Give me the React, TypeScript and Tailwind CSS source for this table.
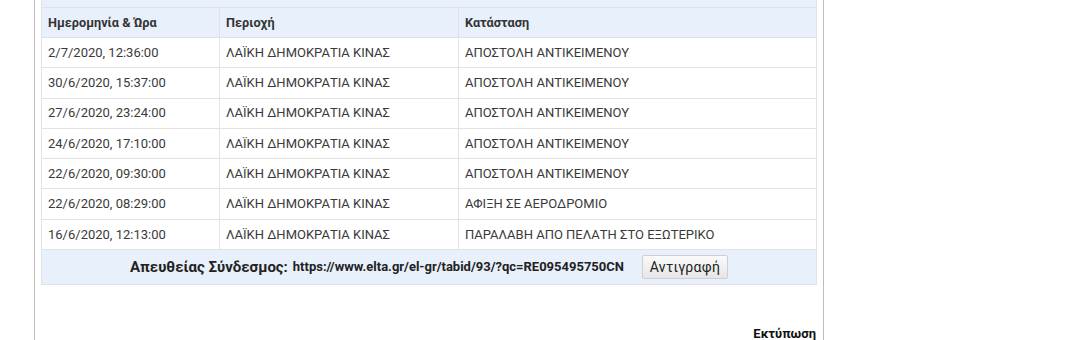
import React from "react";

const rows = [
  ["2/7/2020, 12:36:00", "ΛΑΪΚΗ ΔΗΜΟΚΡΑΤΙΑ ΚΙΝΑΣ", "ΑΠΟΣΤΟΛΗ ΑΝΤΙΚΕΙΜΕΝΟΥ"],
  ["30/6/2020, 15:37:00", "ΛΑΪΚΗ ΔΗΜΟΚΡΑΤΙΑ ΚΙΝΑΣ", "ΑΠΟΣΤΟΛΗ ΑΝΤΙΚΕΙΜΕΝΟΥ"],
  ["27/6/2020, 23:24:00", "ΛΑΪΚΗ ΔΗΜΟΚΡΑΤΙΑ ΚΙΝΑΣ", "ΑΠΟΣΤΟΛΗ ΑΝΤΙΚΕΙΜΕΝΟΥ"],
  ["24/6/2020, 17:10:00", "ΛΑΪΚΗ ΔΗΜΟΚΡΑΤΙΑ ΚΙΝΑΣ", "ΑΠΟΣΤΟΛΗ ΑΝΤΙΚΕΙΜΕΝΟΥ"],
  ["22/6/2020, 09:30:00", "ΛΑΪΚΗ ΔΗΜΟΚΡΑΤΙΑ ΚΙΝΑΣ", "ΑΠΟΣΤΟΛΗ ΑΝΤΙΚΕΙΜΕΝΟΥ"],
  ["22/6/2020, 08:29:00", "ΛΑΪΚΗ ΔΗΜΟΚΡΑΤΙΑ ΚΙΝΑΣ", "ΑΦΙΞΗ ΣΕ ΑΕΡΟΔΡΟΜΙΟ"],
  ["16/6/2020, 12:13:00", "ΛΑΪΚΗ ΔΗΜΟΚΡΑΤΙΑ ΚΙΝΑΣ", "ΠΑΡΑΛΑΒΗ ΑΠΟ ΠΕΛΑΤΗ ΣΤΟ ΕΞΩΤΕΡΙΚΟ"],
];

export default function App() {
  return (
    <div className="w-[1080px] h-[340px] bg-white overflow-hidden" style={{ fontFamily: "Roboto, 'Noto Sans', sans-serif" }}>
      <div className="ml-[34px] w-[790px] h-[340px] border-l border-r border-[#bdbdbd] pl-[6px] pr-[6px] flex flex-col">
        <div className="w-[776px] border-l border-r border-[#e3e3e3]">
          <div className="h-[8px] bg-[#e8f0fb] border-b border-[#dfe3e8]" />
          <div className="flex h-[30px] bg-[#e8f0fb] border-b border-[#dfe3e8] text-[12.7px] font-bold text-[#333] items-center">
            <div className="w-[178px] pl-[6px] border-r border-[#dfe3e8] h-full flex items-center">Ημερομηνία &amp; Ώρα</div>
            <div className="w-[239px] pl-[6px] border-r border-[#dfe3e8] h-full flex items-center">Περιοχή</div>
            <div className="flex-1 pl-[6px] h-full flex items-center">Κατάσταση</div>
          </div>
          {rows.map((r, i) => (
            <div key={i} className="flex h-[30.3px] border-b border-[#e3e3e3] text-[13px] text-[#3a3a3a] items-center">
              <div className="w-[178px] pl-[6px] border-r border-[#e3e3e3] h-full flex items-center">{r[0]}</div>
              <div className="w-[239px] pl-[6px] border-r border-[#e3e3e3] h-full flex items-center">{r[1]}</div>
              <div className="flex-1 pl-[6px] h-full flex items-center">{r[2]}</div>
            </div>
          ))}
          <div className="h-[35px] bg-[#e8f0fb] border-b border-[#dfe3e8] flex items-center justify-center text-[#222]">
            <span className="text-[15px] font-bold">Απευθείας Σύνδεσμος:</span>
            <span className="text-[13px] font-bold ml-[5px]">https://www.elta.gr/el-gr/tabid/93/?qc=RE095495750CN</span>
            <button className="ml-[18px] h-[24px] w-[86px] text-[14px] tracking-[0.3px] text-[#222] border border-[#cfcfcf] rounded-[2px] bg-gradient-to-b from-[#fafafa] to-[#e6e6e6]">Αντιγραφή</button>
          </div>
        </div>
        <div className="w-[776px] flex justify-end mt-[39px] pr-[1px] text-[13px] font-bold text-[#111]">Εκτύπωση</div>
      </div>
    </div>
  );
}
